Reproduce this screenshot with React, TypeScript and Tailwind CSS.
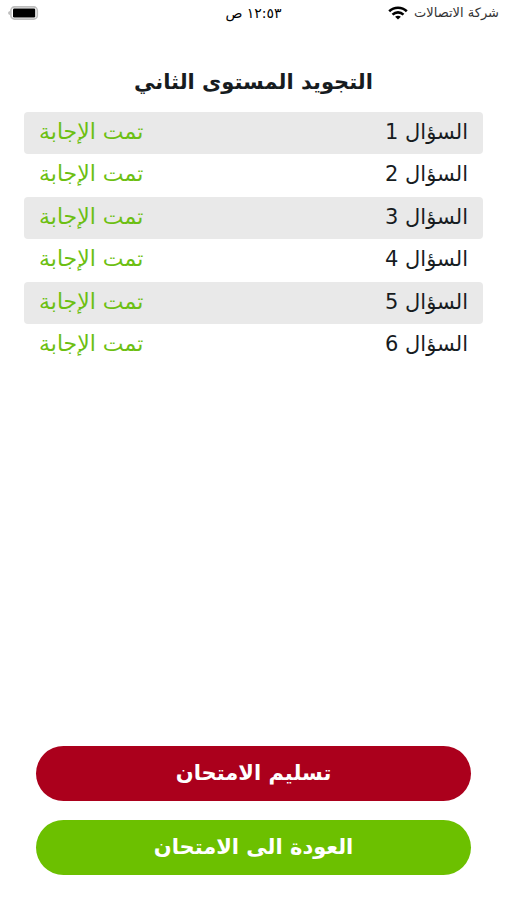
const questions = [1, 2, 3, 4, 5, 6];

function WifiIcon() {
  return (
    <svg viewBox="0 0 20 14" className="h-[14px] w-5" fill="none" stroke="#000" strokeWidth="2.6" aria-hidden="true">
      <path d="M1.2 5.3C6.2.5 13.8.5 18.8 5.3" />
      <path d="M4.5 8.6c3.2-3 7.8-3 11 0" />
      <path d="M10 13.6 7.1 10.8c1.7-1.5 4.1-1.5 5.8 0z" fill="#000" stroke="none" />
    </svg>
  );
}

function BatteryIcon() {
  return (
    <svg viewBox="0 0 31 14" className="h-[14px] w-[31px]" aria-hidden="true">
      <rect x="2.9" y="0.9" width="26.4" height="12.2" rx="3.6" fill="#fff" stroke="#bdbdbd" strokeWidth="1.6" />
      <rect x="5" y="2.6" width="22.2" height="8.8" rx="1.2" fill="#000" />
      <path d="M1.6 5v4C0 8.4 0 5.6 1.6 5z" fill="#999" />
    </svg>
  );
}

export default function App() {
  return (
    <div
      dir="rtl"
      lang="ar"
      className="flex min-h-screen flex-col bg-white font-['DejaVu_Sans',sans-serif] text-[#171c1f]"
    >
      <header className="grid h-[26px] grid-cols-3 items-center px-2 text-[13px] text-black">
        <div className="flex items-center gap-1.5 whitespace-nowrap text-[#333]">
          <span>شركة الاتصالات</span>
          <WifiIcon />
        </div>
        <time className="text-center text-sm">١٢:٥٣ ص</time>
        <div className="flex justify-end">
          <BatteryIcon />
        </div>
      </header>

      <main className="flex flex-1 flex-col px-6 pt-[38px] pb-[25px]">
        <h1 className="h-12 text-center text-[21px] leading-9 font-bold">التجويد المستوى الثاني</h1>
        <ul>
          {questions.map((n) => (
            <li
              key={n}
              className="flex h-[42px] items-baseline justify-between rounded-sm px-[15px] text-[21px] leading-10 odd:bg-[#e9e9e9] even:h-[43px]"
            >
              <span>السؤال {n}</span>
              <span className="text-[22px] text-[#6cbf12]">تمت الإجابة</span>
            </li>
          ))}
        </ul>
        <div className="mt-auto flex flex-col gap-[19px] px-3 text-[21px] font-bold text-white">
          <button type="button" className="h-[55px] rounded-full bg-[#ab001c]">
            تسليم الامتحان
          </button>
          <button type="button" className="h-[55px] rounded-full bg-[#6cc000]">
            العودة الى الامتحان
          </button>
        </div>
      </main>
    </div>
  );
}
